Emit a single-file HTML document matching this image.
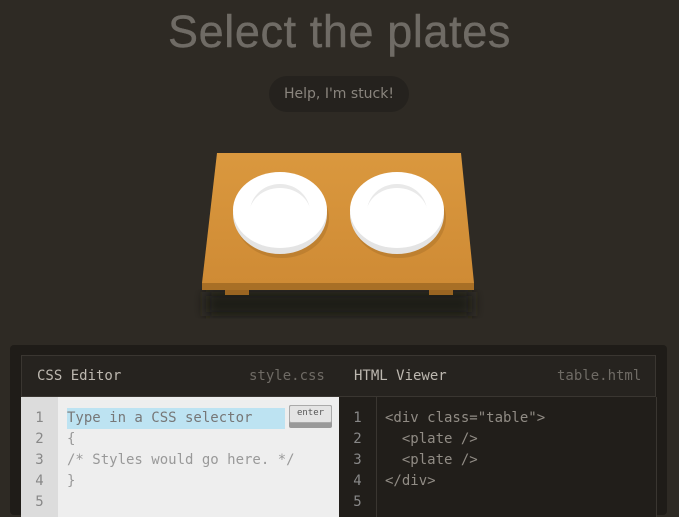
<!DOCTYPE html>
<html><head><style>
body{margin:0;width:679px;height:507px;background:#2e2a24;overflow:hidden;position:relative;font-family:"Liberation Sans",sans-serif}
.a{position:absolute}
h1{position:absolute;top:6px;left:0;width:679px;text-align:center;margin:0;font-size:45px;font-weight:normal;color:#6f6b65;-webkit-text-stroke:0.4px #6f6b65;letter-spacing:0.6px}
.help{left:269px;top:76px;width:140px;height:36px;border-radius:18px;background:#25221e;color:#8a857e;font-size:14px;text-align:center;line-height:36px;font-family:"DejaVu Sans",sans-serif}
.mono{font-family:"DejaVu Sans Mono",monospace;font-size:14px}
.ln{line-height:21px}
</style></head><body>
<h1>Select the plates</h1>
<div class="a help">Help, I'm stuck!</div>
<svg class="a" style="left:0;top:140px" width="679" height="200">
<defs><linearGradient id="g" x1="0" y1="0" x2="0" y2="1"><stop offset="0" stop-color="#da983e"/><stop offset="1" stop-color="#cf8b35"/></linearGradient>
<filter id="b"><feGaussianBlur stdDeviation="6"/></filter></defs>
<rect x="206" y="152" width="266" height="24" fill="#1f1c18" filter="url(#b)"/>
<polygon points="217,13 461,13 474,143 202,143" fill="url(#g)"/>
<rect x="202" y="143" width="272" height="7" fill="#a86f26"/>
<rect x="225" y="150" width="24" height="5" fill="#9a6522"/>
<rect x="429" y="150" width="24" height="5" fill="#9a6522"/>
<ellipse cx="282" cy="78" rx="47" ry="40" fill="#b77a2d" opacity=".7"/>
<ellipse cx="399" cy="78" rx="47" ry="40" fill="#b77a2d" opacity=".7"/>
<ellipse cx="280" cy="74" rx="47" ry="40" fill="#e4e4e4"/>
<ellipse cx="280" cy="70" rx="47" ry="38" fill="#fff"/>
<ellipse cx="280" cy="72" rx="30" ry="28" fill="#e9e9e9"/>
<ellipse cx="280" cy="75" rx="31" ry="27" fill="#fff"/>
<ellipse cx="397" cy="74" rx="47" ry="40" fill="#e4e4e4"/>
<ellipse cx="397" cy="70" rx="47" ry="38" fill="#fff"/>
<ellipse cx="397" cy="72" rx="30" ry="28" fill="#e9e9e9"/>
<ellipse cx="397" cy="75" rx="31" ry="27" fill="#fff"/>
</svg>
<div class="a" style="left:10px;top:345px;width:657px;height:170px;background:#1f1c18;border-radius:4px"></div>
<div class="a" style="left:21px;top:355px;width:635px;height:42px;background:#26231f;border:1px solid #3a3631;box-sizing:border-box"></div>
<div class="a mono" style="left:37px;top:368px;color:#bdb8b0">CSS Editor</div>
<div class="a mono" style="left:249px;top:368px;color:#6f6b65">style.css</div>
<div class="a mono" style="left:354px;top:368px;color:#bdb8b0">HTML Viewer</div>
<div class="a mono" style="left:557px;top:368px;color:#6f6b65">table.html</div>
<div class="a" style="left:21px;top:397px;width:318px;height:120px;background:#eeeeee"></div>
<div class="a" style="left:21px;top:397px;width:37px;height:120px;background:#dcdcdc"></div>
<div class="a" style="left:67px;top:408px;width:218px;height:21px;background:#bde3f2"></div>
<div class="a" style="left:289px;top:405px;width:43px;height:23px;background:#999;border-radius:2px"></div>
<div class="a" style="left:289px;top:405px;width:43px;height:18px;background:#e4e4e4;border:1px solid #aaa;box-sizing:border-box;border-radius:2px;font-size:9px;font-family:'DejaVu Sans Mono',monospace;text-align:center;line-height:15px;color:#555">enter</div>
<div class="a mono ln" style="left:21px;top:408px;width:37px;text-align:center;color:#888">1<br>2<br>3<br>4<br>5</div>
<div class="a mono ln" style="left:67px;top:408px;color:#999"><span style="color:#777">Type in a CSS selector</span><br>{<br>/* Styles would go here. */<br>}</div>
<div class="a" style="left:339px;top:397px;width:317px;height:120px;background:#211e1a;border-right:1px solid #3a3631"></div>
<div class="a" style="left:376px;top:397px;width:1px;height:120px;background:#3a3631"></div>
<div class="a mono ln" style="left:339px;top:408px;width:37px;text-align:center;color:#888">1<br>2<br>3<br>4<br>5</div>
<div class="a mono ln" style="left:385px;top:408px;color:#918c85;white-space:pre">&lt;div class="table"&gt;
  &lt;plate /&gt;
  &lt;plate /&gt;
&lt;/div&gt;</div>
</body></html>
